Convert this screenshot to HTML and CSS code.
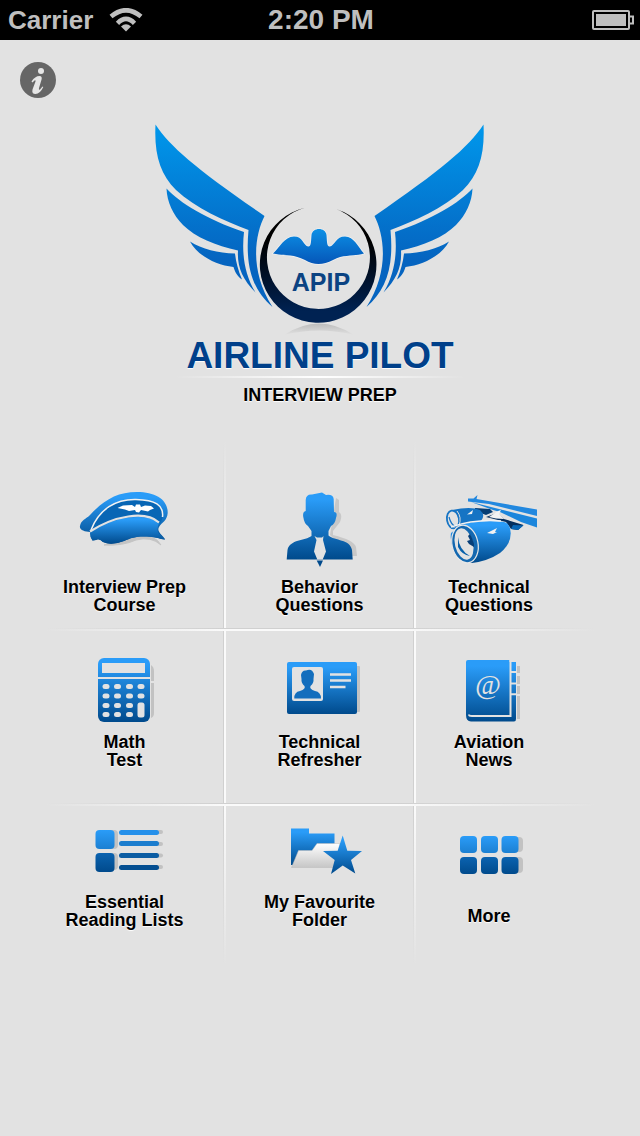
FILE: index.html
```html
<!DOCTYPE html>
<html lang="en">
<head>
    <meta charset="UTF-8">
    <meta name="viewport" content="width=device-width, initial-scale=1.0">
    <title>Airline Pilot Interview Prep</title>
    <link rel="stylesheet" href="styles.css">
</head>
<body>
    <!-- shared gradients -->
    <svg class="defs" width="0" height="0" aria-hidden="true">
        <defs>
            <linearGradient id="blue" x1="0" y1="0" x2="0" y2="1">
                <stop offset="0.1" stop-color="#2a9cf8"/>
                <stop offset="1" stop-color="#004a8c"/>
            </linearGradient>
            <linearGradient id="light" x1="0" y1="0" x2="0" y2="1">
                <stop offset="0" stop-color="#2a9cf8"/>
                <stop offset="1" stop-color="#1c80d2"/>
            </linearGradient>
            <linearGradient id="dark" x1="0" y1="0" x2="0" y2="1">
                <stop offset="0" stop-color="#0b63b0"/>
                <stop offset="1" stop-color="#004a8c"/>
            </linearGradient>
            <linearGradient id="wing" gradientUnits="userSpaceOnUse" x1="0" y1="14" x2="0" y2="150">
                <stop offset="0" stop-color="#0098ec"/>
                <stop offset="1" stop-color="#0564c0"/>
            </linearGradient>
            <linearGradient id="ring" x1="0" y1="0" x2="0" y2="1">
                <stop offset="0.3" stop-color="#000"/>
                <stop offset="0.9" stop-color="#002252"/>
            </linearGradient>
            <linearGradient id="bird" x1="0" y1="0" x2="0" y2="1">
                <stop offset="0" stop-color="#0c90e6"/>
                <stop offset="1" stop-color="#0556b8"/>
            </linearGradient>
            <linearGradient id="paper" x1="0" y1="0" x2="0" y2="1">
                <stop offset="0" stop-color="#fff"/>
                <stop offset="1" stop-color="#c6c6c6"/>
            </linearGradient>
            <linearGradient id="ground" x1="0" y1="0" x2="0" y2="1">
                <stop offset="0" stop-color="#bcbcbc"/>
                <stop offset="1" stop-color="#e2e2e2"/>
            </linearGradient>
        </defs>
    </svg>

    <header class="status-bar">
        <div class="carrier">
            <span>Carrier</span>
            <svg width="34" height="24" viewBox="0 0 34 24" aria-hidden="true">
                <g fill="none" stroke="#bfbfbf" stroke-width="4.600">
                    <path d="M2 8.500Q17 -4 32 8.500"/>
                    <path d="M8.500 15.300Q17 6.500 25.500 15.300"/>
                </g>
                <path d="M12 18.500Q17 14 22 18.500L17 23.500Z" fill="#bfbfbf"/>
            </svg>
        </div>
        <span class="time">2:20 PM</span>
        <div class="battery">
            <svg width="42" height="20" viewBox="0 0 42 20" aria-hidden="true">
                <rect x="1" y="1" width="36" height="18" rx="1" fill="none" stroke="#bfbfbf" stroke-width="2"/>
                <rect x="4" y="4" width="30" height="12" fill="#bfbfbf"/>
                <path d="M38 6.500H41V13.500H38" fill="none" stroke="#bfbfbf" stroke-width="2"/>
            </svg>
        </div>
    </header>

    <main>
        <button class="info" type="button" aria-label="Info">
            <svg width="36" height="36" viewBox="0 0 36 36" aria-hidden="true">
                <circle cx="18" cy="18" r="18" fill="#666"/>
                <circle cx="21" cy="9" r="3" fill="#e6e6e6"/>
                <path d="M11.500 19.500Q15 14 19.500 14Q22.500 14 21.500 17.800L19 26Q18.500 28.500 20 27.500L22.500 24.500L23.300 25Q20 32 15.500 32Q11.500 32 12.500 27.500L15.500 19.500Q15.800 17.500 14.500 18.500L12.500 20.500Z" fill="#e6e6e6"/>
            </svg>
        </button>

        <section class="brand">
            <svg class="logo" width="360" height="226" viewBox="0 0 360 226" role="img" aria-label="APIP">
                <g id="wing-left" fill="url(#wing)">
                    <path d="M15.500 14.500C31 38 58 60 124.500 106C115 125 109 160 132.500 197C113 180 105 158 108.500 120C85 111 55 98 36 80C20 64 14 44 15.500 14.500Z"/>
                    <path d="M26.500 78.500C40 93 66 109 104 122C102 140 103 162 115.500 182.500C102 169 97 156 98 140.500C76 136 55 127 43 115C33 105 27 92 26.500 78.500Z"/>
                    <path d="M50 131.500C62 139 78 143 95 143.500C96 152 98 160 102 169.500C97 166 95 162 93.500 157C76 155 58 146 50 131.500Z"/>
                </g>
                <use href="#wing-left" transform="translate(359 0) scale(-1 1)"/>
                <path d="M165 97.700A58.300 58.300 0 1 0 196 99A51.500 51.500 0 1 1 165 97.700Z" fill="url(#ring)"/>
                <path d="M133 143.500C140 137 144 127 154 126.500C163 126.500 163 135 168 136.500C171.500 137 171 130 171.500 125C172.500 117 185.500 117 186.500 125C187 130 186.500 137 190 136.500C195 135 196 126.500 205 126.500C214 126.500 218 137 224 143.500C210 147 204 144 193 150Q178 158 165 150C153 144 146 146 133 143.500Z" fill="url(#bird)" stroke="#f0f0f0" stroke-width="1.500" paint-order="stroke"/>
                <text x="181" y="181" text-anchor="middle" class="logo-text">APIP</text>
                <path d="M144 225Q179 202 214 225Q179 216 144 225Z" fill="url(#ground)"/>
            </svg>
            <h1>AIRLINE PILOT</h1>
            <div class="rule"></div>
            <h2>INTERVIEW PREP</h2>
        </section>

        <nav class="menu">
            <div class="line vertical v1"></div>
            <div class="line vertical v2"></div>
            <div class="line horizontal h1"></div>
            <div class="line horizontal h2"></div>

            <a href="#course" class="item row1 col1">
                <svg width="100" height="80" viewBox="0 0 100 80" aria-hidden="true">
                    <path d="M29 55Q48 56 61 50Q76 46 86 55Q80 44 62 46Z" fill="#c4c4c4" stroke="#c4c4c4"/>
                    <path d="M5 36C6 30 11 29 15 25C29 10 42 2 62 2C81 2 93 10 92.700 23C92 31 87 32 84 37C81 42 89 46 90 49.500Q86 49 83 48C66 45 58 47 49 51Q36 56 28 52Q24 48 21 50L17.500 50.500Q15 47 15 42C10 42 4 40 5 36Z" fill="url(#blue)"/>
                    <path d="M16 39C24 19 41 9 61 9.500C79 10 89 15 87.500 28Q86 33 84 33C72 22 42 25 16 39Z" fill="#0866b5"/>
                    <path d="M15 42C42 25 72 23 84 33Q81 40 84 43.500L90 49.500Q86 49 83 48C66 45 58 47 49 51Q36 56 28 52Q24 48 21 50L17.500 50.500Q15 47 15 42Z" fill="url(#blue)"/>
                    <path d="M16 40C24 19 41 9 61 9.500C80 10 89 15 87.500 27" fill="none" stroke="#f2f2f2" stroke-width="1.500"/>
                    <path d="M15 41.500C39 26 70 20 84 32.500" fill="none" stroke="#e2e2e2" stroke-width="2.200"/>
                    <path d="M42.500 18L48 15.500L57 15L60 17L61 14.500L65 14.500L66 17L70 15.500L76 16L79 18.500L75 20L73 21.500L66 20L64 22.500L61 22L60 20L54 21L50 19.500Z" fill="#fff"/>
                </svg>
                <span>Interview Prep<br>Course</span>
            </a>

            <a href="#behavior" class="item row1 col2">
                <svg width="100" height="80" viewBox="0 0 100 80" aria-hidden="true">
                    <path d="M66 8L69 10V22Q73 24 70 32L63 41V45Q84 50 86 57L87 66L82 66L60 45Z" fill="#c8c8c8"/>
                    <path d="M35.700 21V10Q36 4 42 4.500L52 2.500L56 5Q63 4 63.700 9L64 22Q68 22 66 28Q65 34 61 36L58.500 41V45.500C65 51 80 49 82 60L82.700 69.500H16.700L17.500 60C20 49 35 51 41.500 46V41L38 36Q34 33 33.500 28Q32 22 35.700 21Z" fill="url(#blue)"/>
                    <path d="M44.500 46L47 47.500H52L53.500 46L53 50L56 61.500L52.700 69.500H47.300L44 61.500L46.500 50Z" fill="#e2e2e2"/>
                    <path d="M46.700 70.500H53L50 77Z" fill="#004a8c"/>
                </svg>
                <span>Behavior<br>Questions</span>
            </a>

            <a href="#technical" class="item row1 col3">
                <svg width="100" height="80" viewBox="0 0 100 80" aria-hidden="true">
                    <path d="M29 8.500L34.500 8.500L38.500 5L37.500 9L98 19.500V26L50 14L29 11.500Z" fill="#2288df"/>
                    <path d="M32 12L98 28.500V37.500L82 32L61 22L54 20Z" fill="#1c86dc"/>
                    <path d="M36 18L51 19L54 22L47 25L36 21Z" fill="#063d73"/>
                    <path d="M47 27L58 23L65 29L84.500 35L79 40L72 39L67 32Z" fill="#052e5c"/>
                    <path d="M72 39L74 35L84.500 35.500L79 40Z" fill="#0866b5"/>
                    <path d="M13 20Q32 16 41 20Q47 25 42 31L28 34L18 39Z" fill="#1674c4"/>
                    <ellipse cx="14" cy="29.500" rx="6" ry="9" fill="#e2e2e2" stroke="#1674c4" stroke-width="1.800" transform="rotate(-10 14 29.500)"/>
                    <path d="M18 21Q23 27 20 36" fill="none" stroke="#e2e2e2" stroke-width="1"/>
                    <path d="M10 27Q12 35 17 37" fill="none" stroke="#1674c4" stroke-width="1.200"/>
                    <path d="M28 24.500L34 20L33 24Z" fill="#f2f2f2"/>
                    <path d="M50 27L59 21L62 20L60 24L65 29L57 28.500Z" fill="#f2f2f2"/>
                    <path d="M21 36Q38 29 65 32Q71 33 71.700 43Q72 54 61 63Q49 71 33 73L21 69Q10 56 12 43Z" fill="url(#blue)"/>
                    <path d="M12 37Q36 29 62 31" fill="none" stroke="#f2f2f2" stroke-width="1.500"/>
                    <ellipse cx="26" cy="54" rx="13" ry="19" fill="#1468b0" stroke="#e8e8e8" stroke-width="1.200" transform="rotate(-12 26 54)"/>
                    <ellipse cx="25" cy="54" rx="9" ry="16" fill="#e2e2e2" transform="rotate(-14 25 54)"/>
                    <path d="M31 44L33 48L35 54L35 57L30 54L28 51L31 50L29 46Z" fill="#073f79"/>
                    <path d="M19 47Q20 60 31 66Q23 65 19 57Z" fill="#0760aa"/>
                    <path d="M48 43L58 38L56 42H58L54 44Z" fill="#f2f2f2"/>
                </svg>
                <span>Technical<br>Questions</span>
            </a>

            <a href="#math" class="item row2 col1">
                <svg width="100" height="78" viewBox="0 0 100 78" aria-hidden="true">
                    <path d="M76 10Q79 12 79 16V26H76ZM76 28H79V58Q79 62 76 63Z" fill="#c2c2c2"/>
                    <rect x="23" y="3" width="52" height="64" rx="6" fill="url(#blue)"/>
                    <g fill="#e2e2e2">
                        <rect x="27" y="8" width="43" height="10"/>
                        <rect x="23" y="22" width="52" height="2"/>
                        <rect x="27.500" y="29" width="7" height="5" rx="2.500"/>
                        <rect x="39" y="29" width="7" height="5" rx="2.500"/>
                        <rect x="51" y="29" width="7" height="5" rx="2.500"/>
                        <rect x="62.500" y="29" width="7" height="5" rx="2.500"/>
                        <rect x="27.500" y="38.500" width="7" height="5" rx="2.500"/>
                        <rect x="39" y="38.500" width="7" height="5" rx="2.500"/>
                        <rect x="51" y="38.500" width="7" height="5" rx="2.500"/>
                        <rect x="62.500" y="38.500" width="7" height="5" rx="2.500"/>
                        <rect x="27.500" y="48" width="7" height="5" rx="2.500"/>
                        <rect x="39" y="48" width="7" height="5" rx="2.500"/>
                        <rect x="51" y="48" width="7" height="5" rx="2.500"/>
                        <rect x="27.500" y="57" width="7" height="5" rx="2.500"/>
                        <rect x="39" y="57" width="7" height="5" rx="2.500"/>
                        <rect x="51" y="57" width="7" height="5" rx="2.500"/>
                        <rect x="62.500" y="47.500" width="7" height="15" rx="2.500"/>
                    </g>
                </svg>
                <span>Math<br>Test</span>
            </a>

            <a href="#refresher" class="item row2 col2">
                <svg width="100" height="78" viewBox="0 0 100 78" aria-hidden="true">
                    <rect x="86" y="11" width="4" height="46" rx="1" fill="#c2c2c2"/>
                    <rect x="17" y="7" width="70" height="52" rx="2" fill="url(#blue)"/>
                    <rect x="22" y="12" width="31" height="34" rx="2" fill="#e2e2e2"/>
                    <path d="M24.300 43.500Q24 37 30 36Q36 34 34.500 31Q31 28 31.500 24L31 20Q32 15 36 15.500Q42 13 44 19L43.500 24Q44 28 40.500 31Q39 34 45 36Q51 37 51 43.500Z" fill="#136ebd"/>
                    <path d="M60 19.500H81M60 25.500H81M60 32H75.500" stroke="#e2e2e2" stroke-width="2.600"/>
                </svg>
                <span>Technical<br>Refresher</span>
            </a>

            <a href="#news" class="item row2 col3">
                <svg width="100" height="78" viewBox="0 0 100 78" aria-hidden="true">
                    <path d="M78 11H81V18H78ZM78 21H81V29H78ZM78 31H81V39H78ZM78 41H81V64H78Z" fill="#c2c2c2"/>
                    <path d="M29 5H70.500V7H77V64Q77 66.500 75 66.500H32Q27 66 27 60V7Q27 5 29 5Z" fill="url(#blue)"/>
                    <path d="M71.500 4V61H33Q30 61 30 59.500" fill="none" stroke="#e2e2e2" stroke-width="2"/>
                    <path d="M72 17H78M72 28.500H78M72 39.300H78" stroke="#e2e2e2" stroke-width="2"/>
                    <text x="49" y="39" text-anchor="middle" class="at">@</text>
                </svg>
                <span>Aviation<br>News</span>
            </a>

            <a href="#reading" class="item row3 col1">
                <svg width="100" height="70" viewBox="0 0 100 70" aria-hidden="true">
                    <g fill="#c2c2c2">
                        <rect x="25" y="15" width="18" height="19" rx="4"/>
                        <rect x="25" y="38" width="18" height="17" rx="4"/>
                        <rect x="52" y="15" width="36" height="4" rx="2"/>
                        <rect x="52" y="27" width="36" height="4" rx="2"/>
                        <rect x="52" y="38.500" width="36" height="4" rx="2"/>
                        <rect x="52" y="50" width="36" height="4" rx="2"/>
                    </g>
                    <rect x="20.500" y="15" width="19" height="19" rx="4" fill="url(#light)"/>
                    <rect x="20.500" y="38" width="19" height="19" rx="4" fill="url(#dark)"/>
                    <rect x="44" y="15" width="40" height="5" rx="2.500" fill="#2590ea"/>
                    <rect x="44" y="26" width="40" height="5" rx="2.500" fill="#1b7dce"/>
                    <rect x="44" y="38" width="40" height="5" rx="2.500" fill="#0b5ca3"/>
                    <rect x="44" y="50" width="40" height="5" rx="2.500" fill="#034e91"/>
                </svg>
                <span>Essential<br>Reading Lists</span>
            </a>

            <a href="#favourites" class="item row3 col2">
                <svg width="100" height="70" viewBox="0 0 100 70" aria-hidden="true">
                    <path d="M21 13.500H39V18.500H64.500V50H21Z" fill="url(#blue)"/>
                    <path d="M21.500 52.500L28.500 35.500H42L47 28.500H70L64 52.500Z" fill="url(#paper)" stroke="#bbb" stroke-width="0.500"/>
                    <path d="M72.700 20.500L77.300 35.700L92 36L81 45L85.300 58.500L72.700 50.500L61 59L64.700 45L53 36L67.700 35.700Z" fill="url(#blue)"/>
                </svg>
                <span>My Favourite<br>Folder</span>
            </a>

            <a href="#more" class="item row3 col3">
                <svg width="100" height="70" viewBox="0 0 100 70" aria-hidden="true">
                    <g fill="#c2c2c2">
                        <rect x="70" y="22" width="14" height="15" rx="4"/>
                        <rect x="70" y="42" width="14" height="16" rx="4"/>
                    </g>
                    <g fill="url(#light)">
                        <rect x="21" y="21" width="17" height="17" rx="4"/>
                        <rect x="42" y="21" width="17" height="17" rx="4"/>
                        <rect x="62.500" y="21" width="17" height="17" rx="4"/>
                    </g>
                    <g fill="url(#dark)">
                        <rect x="21" y="42" width="17" height="17" rx="4"/>
                        <rect x="42" y="42" width="17" height="17" rx="4"/>
                        <rect x="62.500" y="42" width="17" height="17" rx="4"/>
                    </g>
                </svg>
                <span>More</span>
            </a>
        </nav>
    </main>
</body>
</html>
```
FILE: styles.css
```css
* {
    margin: 0;
    padding: 0;
    box-sizing: border-box;
}
body {
    font-family: "Liberation Sans", Arial, sans-serif;
    background-color: #e2e2e2;
    color: #000;
    min-height: 100vh;
}
svg {
    display: block;
}
.defs {
    position: absolute;
}
.status-bar {
    display: grid;
    grid-template-columns: 1fr auto 1fr;
    align-items: center;
    height: 40px;
    padding: 0 6px 0 8px;
    background-color: #000;
    color: #bfbfbf;
    font-weight: bold;
}
.carrier {
    display: flex;
    align-items: center;
    gap: 16px;
    font-size: 26px;
}
.time {
    font-size: 28px;
}
.battery {
    justify-self: end;
}
.info {
    display: block;
    margin: 22px 0 0 20px;
    border: none;
    border-radius: 50%;
    background: none;
    cursor: pointer;
}
.brand {
    display: flex;
    flex-direction: column;
    align-items: center;
    margin-top: 12px;
}
.logo-text {
    font-size: 25px;
    font-weight: bold;
    fill: #0b4382;
}
h1,
h2 {
    font-weight: bold;
    text-shadow: 0 1px 1px #fff;
}
h1 {
    font-size: 37px;
    line-height: 40px;
    color: #00408a;
}
h2 {
    font-size: 18px;
    line-height: 34px;
}
.rule {
    width: 290px;
    height: 2px;
    background: linear-gradient(to right, transparent, #fff, transparent);
}
.menu {
    display: grid;
    grid-template-columns: 197fr 3px 187fr 3px 179fr;
    grid-template-rows: auto 3px auto 3px auto;
    margin: 28px 45px 0 26px;
}
.line.vertical {
    grid-row: 1 / -1;
    background: linear-gradient(to bottom, #e2e2e2, transparent 30%, transparent 70%, #e2e2e2),
        linear-gradient(to right, #d0d0d0 1px, #fafafa 1px);
}
.line.horizontal {
    grid-column: 1 / -1;
    background: linear-gradient(to right, #e2e2e2 20px, transparent 35%, transparent 65%, #e2e2e2),
        linear-gradient(to bottom, #d0d0d0 1px, #fafafa 1px);
}
.v1 {
    grid-column: 2;
}
.v2 {
    grid-column: 4;
}
.h1 {
    grid-row: 2;
}
.h2 {
    grid-row: 4;
}
.item {
    display: flex;
    flex-direction: column;
    align-items: center;
    font-size: 18px;
    font-weight: bold;
    line-height: 18px;
    text-align: center;
    text-decoration: none;
    text-shadow: 0 1px 1px #fff;
    color: #000;
}
.col1 {
    grid-column: 1;
}
.col2 {
    grid-column: 3;
}
.col3 {
    grid-column: 5;
    padding-right: 33px;
}
.row1 {
    grid-row: 1;
    gap: 8px;
    padding-top: 50px;
    padding-bottom: 14px;
}
.row2 {
    grid-row: 3;
    padding-top: 24px;
    padding-bottom: 34px;
}
.row3 {
    grid-row: 5;
    gap: 8px;
    padding-top: 9px;
    padding-bottom: 36px;
}
.row3.col3 {
    gap: 22px;
}
.at {
    font-family: "Liberation Serif", serif;
    font-size: 28px;
    font-style: italic;
    font-weight: normal;
    text-shadow: none;
    fill: #e2e2e2;
}
```
